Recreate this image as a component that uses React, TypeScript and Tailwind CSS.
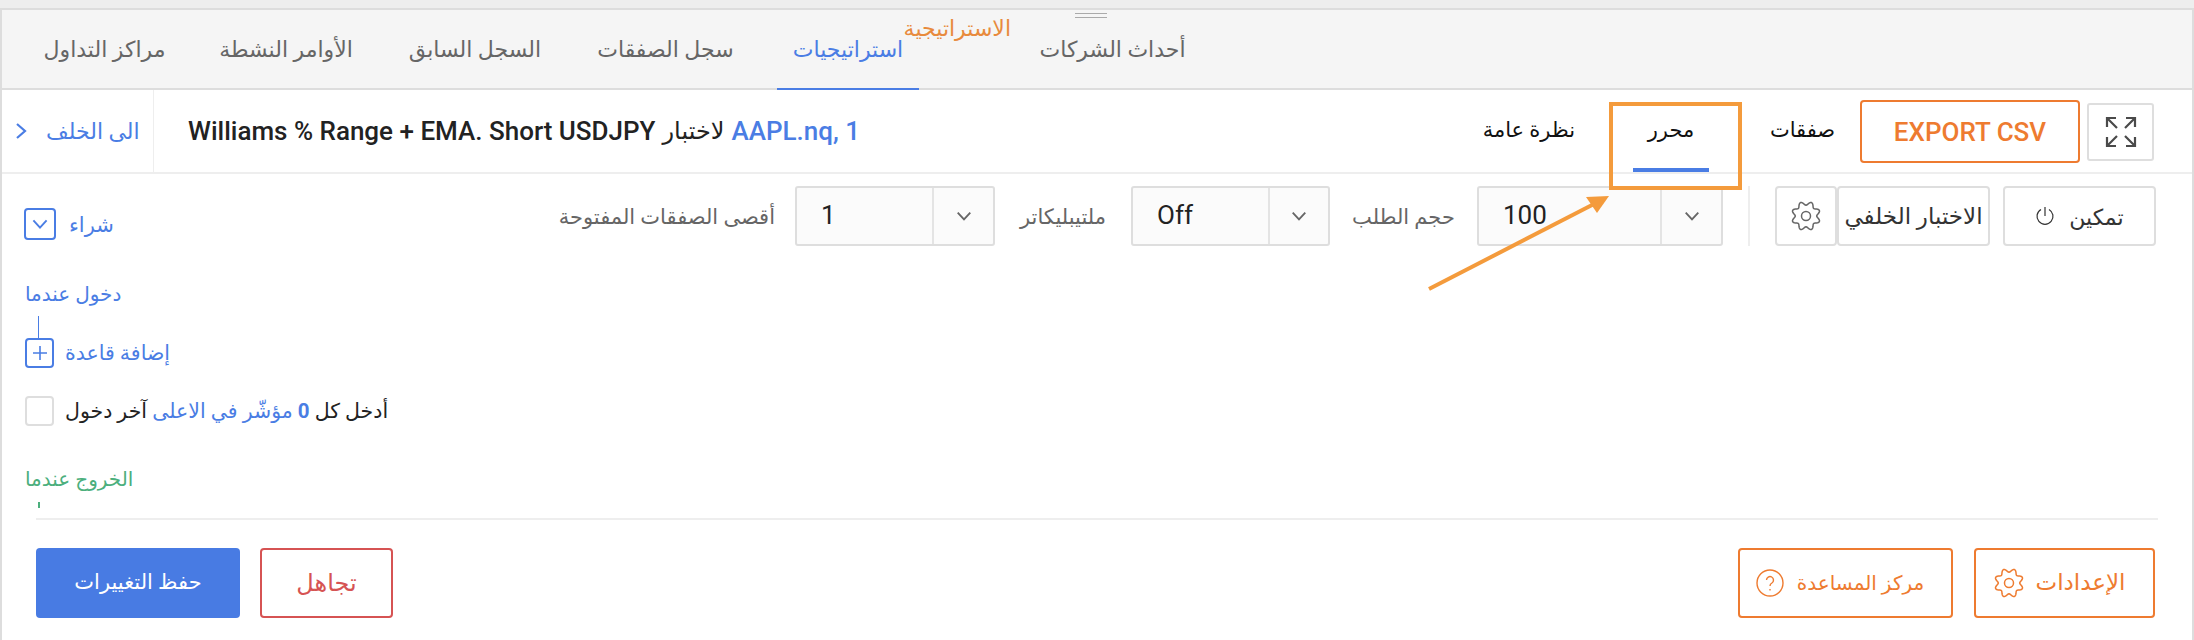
import React from "react";

const font = { fontFamily: 'Roboto, "Noto Sans", "DejaVu Sans", sans-serif' };

const gearPath = (() => {
  const pts: string[] = [];
  for (let i = 0; i <= 96; i++) {
    const t = (i / 96) * Math.PI * 2;
    const r = 12.6 + 1.9 * Math.cos(8 * t + Math.PI);
    pts.push(`${(16 + r * Math.sin(t)).toFixed(2)} ${(16 - r * Math.cos(t)).toFixed(2)}`);
  }
  return "M" + pts.join("L") + "Z";
})();

function Gear({ className }: { className?: string }) {
  return (
    <svg viewBox="0 0 32 32" fill="none" stroke="currentColor" strokeWidth="1.5" className={className}>
      <path d={gearPath} strokeLinejoin="round" />
      <circle cx="16" cy="16" r="4.5" />
    </svg>
  );
}

function Chevron({ className }: { className?: string }) {
  return (
    <svg viewBox="0 0 14 10" fill="none" stroke="currentColor" strokeWidth="1.6" className={className}>
      <path d="M1.5 2 7 8l5.500-6" />
    </svg>
  );
}

function Sel({ value, w, dw }: { value: string; w: string; dw: string }) {
  return (
    <div className={`flex h-[60px] ${w} shrink-0 rounded-[3px] border-2 border-[#dedede] bg-[#fbfbfb]`}>
      <div className="flex-1 pl-[24px] text-[26px] leading-[54px] text-[#222]">{value}</div>
      <div className={`flex ${dw} items-center justify-center border-l-2 border-[#e4e4e4] text-[#666]`}>
        <Chevron className="h-[12px] w-[16px]" />
      </div>
    </div>
  );
}

function Tab({ children, w, active }: { children?: React.ReactNode; w: string; active?: boolean }) {
  return (
    <div
      dir="rtl"
      className={`flex h-[80px] ${w} shrink-0 items-center justify-center whitespace-nowrap text-[22px] ${
        active ? "border-b-2 border-[#4a7de4] text-[#4a7de4]" : "border-b-2 border-transparent text-[#666]"
      }`}
    >
      {children}
    </div>
  );
}

function Ar({ children, className }: { children: React.ReactNode; className?: string }) {
  return (
    <span dir="rtl" className={`whitespace-nowrap ${className ?? ""}`}>
      {children}
    </span>
  );
}

export default function App() {
  return (
    <div style={font} className="relative h-[640px] w-[2194px] overflow-hidden bg-white">
      <div className="h-[8px] bg-[#eeeeee]" />
      <div className="h-[632px] border-x-2 border-t-2 border-[#dddddd]">
        {/* tabs */}
        <div className="relative flex h-[80px] border-b-2 border-[#dddddd] bg-[#f5f5f5] pl-[34px]">
          <Tab w="w-[137px]">مراكز التداول</Tab>
          <Tab w="w-[48px]" />
          <Tab w="w-[130px]">الأوامر النشطة</Tab>
          <Tab w="w-[59px]" />
          <Tab w="w-[130px]">السجل السابق</Tab>
          <Tab w="w-[58px]" />
          <Tab w="w-[135px]">سجل الصفقات</Tab>
          <Tab w="w-[44px]" />
          <Tab w="w-[142px]" active>استراتيجيات</Tab>
          <Tab w="w-[123px]" />
          <Tab w="w-[141px]">أحداث الشركات</Tab>
          <div className="absolute left-[1073px] top-[3px] h-[5px] w-[32px] border-y border-[#aaaaaa]" />
          <div dir="rtl" className="absolute left-[905px] top-[5px] w-[104px] whitespace-nowrap text-[22px] leading-[28px] text-[#e88a3c]">
            الاستراتيجية
          </div>
        </div>

        {/* header */}
        <div className="flex h-[84px] border-b-2 border-[#eeeeee] text-[#222]">
          <div className="flex h-full w-[152px] shrink-0 items-center border-r border-[#eeeeee] pl-[13px] text-[#4a7de4]">
            <svg viewBox="0 0 12 18" fill="none" stroke="currentColor" strokeWidth="2.2" className="h-[18px] w-[12px]">
              <path d="M2 2l8 7-8 7" />
            </svg>
            <Ar className="ml-[19px] text-[22px]">الى الخلف</Ar>
          </div>
          <div className="flex items-center pl-[34px] text-[26px] font-medium">
            <span>Williams % Range + EMA. Short USDJPY</span>
            <Ar className="mx-[7px] text-[24px]">لاختبار</Ar>
            <span className="text-[#4a7de4]">AAPL.nq, 1</span>
          </div>
          <div className="flex-1" />
          <div className="flex items-center text-[21px] font-medium text-[#111]">
            <Ar className="w-[89px] text-center">نظرة عامة</Ar>
            <div className="relative ml-[58px] flex h-full w-[76px] items-center justify-center border-b-[4px] border-[#4a7de4] pt-[4px]">
              <Ar>محرر</Ar>
            </div>
            <Ar className="ml-[59px] w-[69px] text-center">صفقات</Ar>
          </div>
          <div className="ml-[23px] mt-[10px] flex h-[63px] w-[220px] shrink-0 items-center justify-center rounded-[4px] border-2 border-[#ee7b30] pt-[2px] text-[26px] font-medium text-[#ee7b30]">
            EXPORT CSV
          </div>
          <div className="ml-[7px] mr-[38px] mt-[13px] flex h-[58px] w-[67px] shrink-0 items-center justify-center rounded-[3px] border-2 border-[#dedede] text-[#4a4a4a]">
            <svg viewBox="0 0 32 32" fill="none" stroke="currentColor" strokeWidth="2.2" className="h-[32px] w-[32px]">
              <path d="M2 11V2h9M2 2l10 10M21 2h9v9M30 2 20 12M2 21v9h9M2 30l10-10M21 30h9v-9M30 30 20 20" />
            </svg>
          </div>
        </div>

        {/* controls */}
        <div className="flex h-[344px] flex-col pt-[12px]">
          <div className="flex h-[60px] items-start">
            <div className="ml-[22px] mt-[22px] flex h-[32px] w-[32px] items-center justify-center rounded-[4px] border-2 border-[#4a7de4] text-[#4a7de4]">
              <Chevron className="h-[12px] w-[20px]" />
            </div>
            <Ar className="ml-[13px] mt-[24px] text-[21px] leading-[30px] text-[#4a7de4]">شراء</Ar>
            <div className="flex h-[60px] flex-1 items-center justify-end">
              <Ar className="mr-[20px] pt-[4px] text-[21px] text-[#666]">أقصى الصفقات المفتوحة</Ar>
              <Sel value="1" w="w-[200px]" dw="w-[61px]" />
              <div className="flex w-[136px] justify-center pt-[4px]">
                <Ar className="text-[21px] text-[#666]">ملتيبليكاتر</Ar>
              </div>
              <Sel value="Off" w="w-[199px]" dw="w-[60px]" />
              <div className="flex w-[147px] justify-center pt-[4px]">
                <Ar className="text-[21px] text-[#666]">حجم الطلب</Ar>
              </div>
              <Sel value="100" w="w-[246px]" dw="w-[61px]" />
              <div className="ml-[25px] mr-[25px] h-[60px] w-[2px] bg-[#eeeeee]" />
              <div className="flex h-[60px] w-[62px] items-center justify-center rounded-[4px] border-2 border-[#dedede] text-[#666]">
                <Gear className="h-[32px] w-[32px]" />
              </div>
              <div className="flex h-[60px] w-[153px] items-center justify-center rounded-[4px] border-2 border-[#dedede] pt-[3px] text-[23px] text-[#333]">
                <Ar>الاختبار الخلفي</Ar>
              </div>
              <div className="ml-[13px] mr-[36px] flex h-[60px] w-[153px] items-center justify-center gap-[14px] rounded-[4px] border-2 border-[#dedede] text-[22px] text-[#333]">
                <svg viewBox="0 0 20 20" fill="none" stroke="currentColor" strokeWidth="1.2" className="h-[20px] w-[20px]">
                  <path d="M10 1v9M6 3.400a8 8 0 1 0 8 0" />
                </svg>
                <Ar className="pt-[3px]">تمكين</Ar>
              </div>
            </div>
          </div>

          <Ar className="ml-[23px] mt-[36px] block w-fit text-[20px] leading-[24px] text-[#4a7de4]">دخول عندما</Ar>
          <div className="ml-[36px] mt-[10px] h-[22px] w-[1px] bg-[#4a7de4]" />
          <div className="ml-[23px] flex items-center">
            <div className="flex h-[30px] w-[29px] items-center justify-center rounded-[4px] border-2 border-[#4a7de4] text-[#4a7de4]">
              <svg viewBox="0 0 16 16" stroke="currentColor" strokeWidth="1.6" className="h-[16px] w-[16px]">
                <path d="M8 1v14M1 8h14" />
              </svg>
            </div>
            <Ar className="ml-[11px] text-[20.5px] leading-[30px] text-[#4a7de4]">إضافة قاعدة</Ar>
          </div>
          <div className="ml-[23px] mt-[28px] flex items-center">
            <div className="h-[30px] w-[29px] rounded-[4px] border-2 border-[#dedede]" />
            <div dir="rtl" className="ml-[11px] whitespace-nowrap text-[20.5px] leading-[30px] text-[#222]">
              أدخل كل <span className="font-bold text-[#4a7de4]">0</span>{" "}
              <span className="text-[#4a7de4]">مؤشّر في الاعلى</span> آخر دخول
            </div>
          </div>
          <Ar className="ml-[23px] mt-[41px] block w-fit text-[20px] leading-[24px] text-[#4caf7d]">الخروج عندما</Ar>
          <div className="ml-[36px] mt-[11px] h-[6px] w-[2px] bg-[#4caf7d]" />
        </div>

        {/* footer */}
        <div className="mx-[34px] mr-[34px] h-[2px] bg-[#eeeeee]" />
        <div className="flex items-start pl-[34px] pr-[37px] pt-[28px]">
          <div className="flex h-[70px] w-[204px] items-center justify-center rounded-[4px] bg-[#487be3] text-[21px] font-medium text-white">
            <Ar>حفظ التغييرات</Ar>
          </div>
          <div className="ml-[20px] flex h-[70px] w-[133px] items-center justify-center rounded-[4px] border-2 border-[#d65353] text-[24px] text-[#d65353]">
            <Ar>تجاهل</Ar>
          </div>
          <div className="flex-1" />
          <div className="flex h-[70px] w-[215px] items-center justify-center gap-[13px] rounded-[4px] border-2 border-[#ee7b30] pr-[11px] text-[20px] text-[#ee7b30]">
            <svg viewBox="0 0 28 28" fill="none" stroke="currentColor" strokeWidth="1.4" className="h-[28px] w-[28px]">
              <circle cx="14" cy="14" r="13" />
              <path d="M10.500 11a3.500 3.500 0 1 1 5.400 3c-1.300.8-1.900 1.500-1.900 3M14 20v1.500" />
            </svg>
            <Ar>مركز المساعدة</Ar>
          </div>
          <div className="ml-[21px] flex h-[70px] w-[181px] items-center justify-center gap-[11px] rounded-[4px] border-2 border-[#ee7b30] pr-[11px] text-[23px] text-[#ee7b30]">
            <Gear className="h-[32px] w-[32px]" />
            <Ar>الإعدادات</Ar>
          </div>
        </div>
      </div>

      {/* annotation */}
      <div className="absolute left-[1609px] top-[102px] h-[88px] w-[133px] border-[4px] border-[#f49b3c]" />
      <svg className="absolute left-[1420px] top-[190px]" width="200" height="110" viewBox="0 0 200 110" fill="none">
        <path d="M9 99 174 14" stroke="#f49b3c" strokeWidth="4" />
        <path d="M189 6 166 7 177 23z" fill="#f49b3c" />
      </svg>
    </div>
  );
}
